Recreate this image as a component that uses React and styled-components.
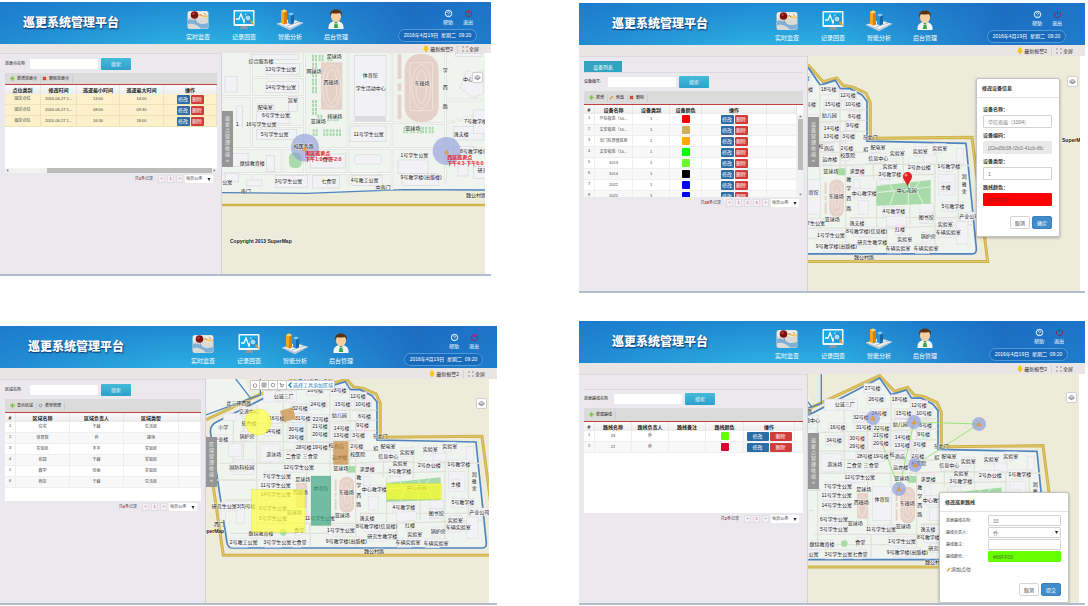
import React from "react";
import styled, { createGlobalStyle, css } from "styled-components";

const Global = createGlobalStyle`
  *, *::before, *::after { box-sizing: border-box; }
  body {
    margin: 0;
    background: #fff;
    color: #444;
    font-family: "Liberation Sans", "Noto Sans CJK SC", sans-serif;
    font-size: 5px;
    line-height: 8px;
  }
  button, input, select { font: inherit; color: inherit; margin: 0; }
  a { color: inherit; text-decoration: none; }
`;

/* ---------- page frame ---------- */

const Page = styled.main`
  display: flex;
  gap: 82px;
  padding-right: 3px;
`;
const Column = styled.div`
  flex: ${(p) => p.$grow} 1 0;
  min-width: 0;
  display: flex;
  flex-direction: column;
  gap: ${(p) => p.$gap}px;
  padding-top: ${(p) => p.$top}px;
`;
const Screen = styled.section`
  display: flex;
  flex-direction: column;
  margin-right: ${(p) => p.$inset || 0}px;
  min-height: ${(p) => p.$height}px;
  border-bottom: 2px solid #b4bdcb;
`;

/* ---------- header ---------- */

const Header = styled.header`
  display: flex;
  height: 42px;
  padding: 0 ${(p) => p.$right}px 0 ${(p) => p.$left}px;
  color: #fff;
  background:
    linear-gradient(90deg, rgba(26, 114, 200, 0.6) 0%, rgba(38, 160, 220, 0) 34%, rgba(38, 160, 220, 0) 52%, rgba(28, 104, 192, 0.85) 84%, rgba(28, 112, 198, 0.8) 100%),
    linear-gradient(180deg, #1f8ad2 0%, #2caee1 100%);
`;
const Title = styled.h1`
  flex: 0 0 152px;
  margin: 0;
  font-size: 12px;
  font-weight: 900;
  line-height: 42px;
  text-shadow: 1px 1px 1px #10457f, 0 1px 1px #10457f;
  white-space: nowrap;
`;
const Nav = styled.nav`
  display: flex;
`;
const NavLink = styled.a`
  width: 46px;
  padding-top: 6px;
  display: flex;
  flex-direction: column;
  align-items: center;
  gap: 3px;
  font-size: 6px;
  white-space: nowrap;
`;
const Tools = styled.div`
  margin-left: auto;
  padding-top: 7px;
  display: flex;
  flex-direction: column;
  align-items: flex-end;
`;
const ToolRow = styled.div`
  display: flex;
  gap: 2px;
`;
const ToolButton = styled.button`
  width: 18px;
  height: 18px;
  padding: 0;
  border: 0;
  background: none;
  display: flex;
  flex-direction: column;
  align-items: center;
  line-height: 8px;
`;
const DatePill = styled.time`
  width: 79px;
  height: 13px;
  margin-top: 2px;
  border: 1px solid #4d9bd8;
  border-radius: 7px;
  background: rgba(20, 96, 176, 0.5);
  line-height: 11px;
  text-align: center;
  white-space: nowrap;
`;
const StatusBar = styled.div`
  display: flex;
  justify-content: flex-end;
  align-items: center;
  height: ${(p) => p.$height}px;
  padding-right: 12px;
  background: #e9e5e5;
  color: #333;
`;
const StatusLink = styled.a`
  display: flex;
  align-items: center;
  gap: 1px;
  & + & {
    margin-left: 4px;
    padding-left: 4px;
    border-left: 1px solid #d5d0d0;
  }
`;

/* ---------- side panel ---------- */

const Body = styled.div`
  flex: 1;
  display: flex;
`;
const Side = styled.aside`
  flex: 0 0 ${(p) => p.$width}px;
  padding: 4px 4px 0 5px;
  background: #ebe9ee;
  border-top: 1px solid #dcd9de;
  border-right: 1px solid #d4d1d8;
`;
const Tabs = styled.div`
  display: flex;
  height: ${(p) => p.$height}px;
  margin-bottom: 3px;
  border-bottom: 1px solid #dcd9df;
`;
const Tab = styled.button`
  width: 38px;
  padding: 0;
  border: 0;
  background: #31a3c0;
  color: #fff;
`;
const Search = styled.form`
  display: flex;
  align-items: center;
  gap: 3px;
  margin-bottom: 3px;
  color: #222;
`;
const SearchLabel = styled.label`
  flex: 0 0 ${(p) => p.$width}px;
  font-size: 4px;
  white-space: nowrap;
`;
const SearchInput = styled.input`
  width: 68px;
  height: 10px;
  border: 0;
  border-radius: 1px;
  background: #fff;
`;
const SearchButton = styled.button`
  width: 30px;
  height: 12px;
  padding: 0;
  border: 0;
  border-radius: 1px;
  background: linear-gradient(#45bbd9, #2da0cc);
  color: #e6f6fb;
`;
const Toolbar = styled.div`
  display: flex;
  align-items: center;
  height: ${(p) => p.$height}px;
  padding-left: 4px;
  background: #dbdbdb;
  border-bottom: 1px solid #c33f3f;
`;
const ToolbarButton = styled.button`
  display: flex;
  align-items: center;
  gap: 2px;
  height: 8px;
  padding: 0 3px 0 1px;
  border: 0;
  border-right: 1px solid #cdcdcd;
  background: none;
  color: #222;
  font-size: 4px;
  white-space: nowrap;
`;
const GridBox = styled.div`
  display: flex;
  flex-direction: column;
  height: ${(p) => p.$height}px;
  background: #fff;
  overflow: hidden;
`;
const GridRow = styled.div`
  flex: 1;
  display: flex;
  align-items: flex-start;
  min-height: 0;
`;
const Table = styled.table`
  flex: 1;
  min-width: 0;
  border-collapse: separate;
  border-spacing: 0;
  table-layout: fixed;
`;
const Th = styled.th`
  width: ${(p) => (p.$w ? p.$w + "px" : "auto")};
  height: 9px;
  padding: 0;
  background: linear-gradient(#fafafa, #ececec);
  border-right: 1px solid #e6e6e6;
  color: #222;
  font-size: 5px;
  font-weight: 700;
  line-height: 8px;
  white-space: nowrap;
`;
const Tr = styled.tr`
  background: ${(p) => (p.$tone === "warm" ? "#fcf1cb" : p.$odd ? "#f8f8f8" : "#fff")};
`;
const Td = styled.td`
  height: 11px;
  padding: 0;
  border-right: 1px solid ${(p) => (p.$tone === "warm" ? "#efe3b8" : "#efefef")};
  border-bottom: 1px solid ${(p) => (p.$tone === "warm" ? "#efe3b8" : "#efefef")};
  font-size: 4px;
  line-height: 8px;
  text-align: center;
  white-space: nowrap;
  overflow: hidden;
  &:first-child { vertical-align: ${(p) => (p.$tone === "warm" ? "middle" : "top")}; }
`;
const Actions = styled.div`
  display: flex;
  justify-content: center;
  gap: 1px;
`;
const ActionButton = styled.button`
  width: ${(p) => (p.$wide ? 22 : 13)}px;
  height: 9px;
  padding: 0;
  border: 0;
  border-radius: 1px;
  background: ${(p) => (p.$danger ? "#d03c3a" : "#2c6ca5")};
  color: #fff;
  font-size: 5px;
  line-height: 8px;
`;
const Swatch = styled.span`
  display: block;
  width: 8px;
  height: 8px;
  margin: 0 auto;
  border-radius: 1px;
  background: ${(p) => p.$color};
`;
const VRail = styled.div`
  flex: 0 0 6px;
  align-self: stretch;
  margin-top: 9px;
  padding-left: 1px;
  display: flex;
  flex-direction: column;
  background: #f1f1f1;
`;
const HRail = styled.div`
  display: flex;
  height: 5px;
  background: #f1f1f1;
`;
const HTrack = styled.div`
  flex: 1;
  padding-left: 37px;
`;
const VTrack = styled.div`
  flex: 1;
`;
const Thumb = styled.div`
  height: ${(p) => p.$h}px;
  background: #bcbcbc;
`;
const Pager = styled.div`
  display: flex;
  justify-content: flex-end;
  align-items: center;
  gap: 2px;
  margin-top: 2px;
  padding-right: 4px;
  font-size: 4px;
  b { color: #c22; }
`;
const Total = styled.span`
  margin-right: 3px;
`;
const PageButton = styled.button`
  width: 7px;
  height: 8px;
  padding: 0;
  border: 1px solid #e0dde3;
  background: #f3f1f5;
  color: ${(p) => (p.$number ? "#d22" : "#777")};
  line-height: 6px;
`;
const SizeSelect = styled.select`
  width: 28px;
  height: 8px;
  padding: 0 1px;
  border: 0;
  background: #fff url("data:image/svg+xml,%3Csvg xmlns='http://www.w3.org/2000/svg' width='4' height='3'%3E%3Cpath d='M.5 0h3L2 3z' fill='%23222'/%3E%3C/svg%3E") no-repeat right 2px center;
  appearance: none;
`;

/* ---------- map ---------- */

const MapArea = styled.div`
  position: relative;
  flex: 1;
  min-width: 0;
  margin-right: ${(p) => p.$inset}px;
  background: #edecdb;
  overflow: hidden;
`;
const MapSvg = styled.svg`
  position: absolute;
  inset: 0;
  width: 100%;
  height: 100%;
  text {
    font-size: 5px;
    text-anchor: middle;
    fill: #161616;
    stroke: #fff;
    stroke-width: 1px;
    stroke-opacity: 0.5;
    paint-order: stroke;
  }
`;
const Collapse = styled.button`
  position: absolute;
  left: 0;
  top: ${(p) => p.$top}px;
  width: 11px;
  padding: 4px 0;
  border: 0;
  background: #969696;
  color: #eee;
  display: flex;
  flex-direction: column;
  align-items: center;
  font-size: 5px;
  line-height: 6px;
`;
const LayerButton = styled.button`
  position: absolute;
  top: ${(p) => p.$top}px;
  right: 2px;
  width: 11px;
  height: 11px;
  padding: 1px;
  border: 1px solid #cfcfcf;
  border-radius: 2px;
  background: #fff;
  display: flex;
`;
const DrawTools = styled.div`
  position: absolute;
  top: 1px;
  left: 44px;
  display: flex;
  align-items: center;
  height: 10px;
  background: #fff;
  border: 1px solid #c9c9c9;
  color: #1a86c0;
  white-space: nowrap;
`;
const DrawButton = styled.button`
  width: 9px;
  height: 8px;
  padding: 1px;
  border: 0;
  border-right: 1px solid #ccc;
  background: none;
  display: flex;
`;
const DrawHint = styled.span`
  display: flex;
  align-items: center;
  gap: 1px;
  padding: 0 1px;
`;

/* ---------- dialogs ---------- */

const Dialog = styled.form`
  position: absolute;
  right: ${(p) => p.$right}px;
  width: ${(p) => p.$width}px;
  background: #fff;
  border: 1px solid #c4c4c0;
  border-radius: 2px;
  box-shadow: 0 1px 3px rgba(0, 0, 0, 0.3);
  ${(p) => (p.$dock ? css`bottom: 0;` : css`top: ${p.$top}px;`)}
`;
const DialogTitle = styled.h2`
  height: 19px;
  margin: 0;
  padding-left: 5px;
  border-bottom: 1px solid #e4e4e4;
  color: #333;
  font-size: 5px;
  line-height: 18px;
`;
const Fields = styled.div`
  display: flex;
  flex-direction: column;
  padding: ${(p) => (p.$inline ? "3px 7px 0 6px" : "7px 7px 0 6px")};
  gap: ${(p) => (p.$inline ? 1 : 0)}px;
`;
const Field = styled.div`
  ${(p) =>
    p.$inline
      ? css`
          display: grid;
          grid-template-columns: 42px 1fr;
          align-items: center;
          font-size: 4px;
        `
      : css`
          display: flex;
          flex-direction: column;
          gap: 2px;
          padding-bottom: 3px;
          font-weight: 700;
          color: #333;
        `}
`;
const control = css`
  width: 100%;
  min-width: 0;
  height: ${(p) => (p.$short ? 11 : 13)}px;
  padding: 0 4px;
  border: 1px solid ${(p) => p.$fill || "#d2d2d2"};
  border-radius: 1px;
  background-color: ${(p) => p.$fill || "#fff"};
  color: ${(p) => p.$ink || "#777"};
  font-size: 5px;
  font-weight: 400;
`;
const Input = styled.input`
  ${control}
`;
const Select = styled.select`
  ${control}
  appearance: none;
  background-image: url("data:image/svg+xml,%3Csvg xmlns='http://www.w3.org/2000/svg' width='3' height='3'%3E%3Cpath d='M0 0h3L1.5 3z' fill='%23222'/%3E%3C/svg%3E");
  background-repeat: no-repeat;
  background-position: right 2px center;
`;
const AddPoint = styled.button`
  display: flex;
  align-items: center;
  align-self: flex-start;
  height: 12px;
  padding: 0;
  border: 0;
  background: none;
  color: #444;
`;
const DialogFooter = styled.div`
  display: flex;
  justify-content: flex-end;
  gap: 2px;
  padding: ${(p) => (p.$inline ? "8px 7px 6px" : "7px 7px")};
`;
const DialogButton = styled.button`
  width: 20px;
  height: 13px;
  padding: 0;
  border: 1px solid ${(p) => (p.$primary ? "#3b82c0" : "#d4d4d4")};
  border-radius: 2px;
  background: ${(p) => (p.$primary ? "#428bca" : "#fff")};
  color: ${(p) => (p.$primary ? "#fff" : "#333")};
`;

/* ---------- icons ---------- */

const PatrolIcon = () => (
  <svg width="22" height="22" viewBox="0 0 22 22">
    <rect x="0.5" y="3" width="21" height="18" rx="2.5" fill="#dcdad6" />
    <path d="M1 9.5C6 8 9 7 13 9s6 1 8-1V5.500Q21 3.500 19 3.500H3Q1 3.500 1 5.500z" fill="#efece6" />
    <path d="M10 7c4-1 6 3 11 1" fill="none" stroke="#f3c566" strokeWidth="1.800" />
    <path d="M1 12c4-1 7 0 9 2s6 3 11 1v3.500a2 2 0 0 1-2 2H14C11 18 8 15 1 16z" fill="#7fb0d8" />
    <path d="M13 6l2 2M17 5l2 2M8 11l1 3" stroke="#8b8b8b" strokeWidth="0.8" />
    <circle cx="7.500" cy="7" r="3.800" fill="#7f1113" />
    <circle cx="6.500" cy="5.800" r="1.200" fill="#b5443f" />
  </svg>
);
const MonitorIcon = () => (
  <svg width="22" height="22" viewBox="0 0 22 22">
    <rect x="0.500" y="2" width="21" height="16" rx="1" fill="#f3f7fa" />
    <rect x="2" y="3.500" width="18" height="12.500" fill="#18a9e6" />
    <path d="M3 11h3l2-5 3 8 2-7 1 3h2" fill="none" stroke="#fff" strokeWidth="1.300" />
    <circle cx="15" cy="10" r="3.200" fill="#9be0fa" stroke="#1663a7" strokeWidth="0.900" />
    <path d="M17.500 12.500l3 4" stroke="#e79c35" strokeWidth="1.600" />
    <path d="M8 18h6l1 3H7z" fill="#8d9aa5" />
  </svg>
);
const ChartIcon = () => (
  <svg width="28" height="22" viewBox="0 0 28 22">
    <path d="M1 16l13-5 13 4-13 7z" fill="#eef2f5" />
    <path d="M14 22L27 15v-1L14 20 1 15v1z" fill="#b5c3cf" />
    <path d="M9 16l12-4M11 18l12-4" stroke="#a4b4c1" strokeWidth="0.800" />
    <path d="M5 3l3-1.500L11 3v12l-3 1.500L5 15z" fill="#f6a81c" />
    <path d="M8 4.500L11 3v12l-3 1.500z" fill="#d97e0a" />
    <path d="M5 3l3-1.500L11 3 8 4.500z" fill="#ffd772" />
    <path d="M12 6l3-1.500L18 6v9l-3 1.500-3-1.500z" fill="#2b8fd6" />
    <path d="M15 7.500L18 6v9l-3 1.500z" fill="#1768ab" />
    <path d="M12 6l3-1.500L18 6l-3 1.500z" fill="#8acdf6" />
  </svg>
);
const UserIcon = () => (
  <svg width="18" height="22" viewBox="0 0 18 22">
    <path d="M1.500 21c-.5-5 2-8 7.500-8s8 3 7.500 8z" fill="#f4f6f4" />
    <path d="M8 14h2l1.200 6H6.800z" fill="#37a64b" />
    <path d="M6 13l3 3 3-3" fill="none" stroke="#c4ccd0" strokeWidth="0.800" />
    <ellipse cx="9" cy="8.500" rx="5" ry="5.500" fill="#f9cf9f" />
    <path d="M3 8C2.500 3 6 1.500 9 1.500S15.500 3 15 8c-.6-1.500-1-2.500-2.500-3C9 6 6 5.500 5 5 3.800 6 3.500 7 3 8z" fill="#5b3210" />
  </svg>
);
const HelpIcon = () => (
  <svg width="9" height="9" viewBox="0 0 9 9" fill="none" stroke="#fff" strokeWidth="1">
    <circle cx="4.500" cy="4.500" r="3.200" />
    <path d="M3.500 3.800c0-1.600 2.200-1.300 2 0-.1.600-1 .6-1 1.300M4.500 5.800v.7" strokeWidth="0.700" />
  </svg>
);
const PowerIcon = () => (
  <svg width="9" height="9" viewBox="0 0 9 9" fill="none" stroke="#96204a" strokeWidth="1">
    <path d="M2.800 2.200a3 3 0 1 0 3.400 0M4.500 1v3.200" />
  </svg>
);
const BellIcon = () => (
  <svg width="6" height="7" viewBox="0 0 6 7">
    <path d="M3 .5C1.500.5 1.200 2 1.200 3.200L.2 5.300h5.600l-1-2.100C4.800 2 4.500.5 3 .5z" fill="#f8c80a" />
    <circle cx="3" cy="5.900" r=".9" fill="#e7a800" />
  </svg>
);
const FullIcon = () => (
  <svg width="6" height="6" viewBox="0 0 6 6" fill="none" stroke="#999" strokeWidth="0.600">
    <path d="M.5 2V.5H2M4 .5h1.500V2M5.500 4v1.500H4M2 5.500H.5V4M1 1l1 1M5 1L4 2M1 5l1-1M5 5L4 4" />
  </svg>
);
const glyphs = {
  plus: <path d="M2.500.3v4.400M.3 2.500h4.400" stroke="#7cc03c" strokeWidth="1.400" />,
  cross: <path d="M1 1l3 3M4 1L1 4" stroke="#d0301c" strokeWidth="1.400" />,
  pencil: <path d="M.8 4.300L4 1" stroke="#e6962e" strokeWidth="1.200" />,
  gear: <circle cx="2.500" cy="2.500" r="1.400" fill="none" stroke="#7792a8" strokeWidth="0.900" />,
};
const Glyph = ({ name }) => (
  <svg width="5" height="5" viewBox="0 0 5 5">{glyphs[name]}</svg>
);
const arrows = {
  up: "M1 3.300L2.500 1.500 4 3.300z",
  down: "M1 1.700L2.500 3.500 4 1.700z",
  left: "M3.300 1L1.500 2.500 3.300 4z",
  right: "M1.700 1L3.500 2.500 1.700 4z",
};
const Arrow = ({ dir }) => (
  <svg width="5" height="5" viewBox="0 0 5 5"><path d={arrows[dir]} fill="#777" /></svg>
);
const LayersIcon = () => (
  <svg width="7" height="7" viewBox="0 0 7 7">
    <path d="M3.500 .8L6.500 2.200 3.500 3.600.5 2.200z" fill="#bdbdc4" />
    <path d="M.5 2.400v2.200L3.500 6.200 6.500 4.600V2.400L3.500 3.900z" fill="#9c9ca6" />
  </svg>
);
const drawShapes = [
  ["平移", <path key="a" d="M1.500 5V2.500l.8-.8 .8.5.8-.5.9.8V4L4 5.300H2.300z" />],
  ["矩形", <path key="b" d="M1 1h4v4H1zM1 3h4M3 1v4" />],
  ["圆形", <circle key="c" cx="3" cy="3" r="1.800" />],
  ["多边形", <path key="d" d="M1 1l1 4 2-.5.8-2L3 3z" />],
];

/* ---------- campus map ---------- */

const places = `公诚三厂,251,227|北三环西路,116,248|交流中心,147,273|软件楼,147,309|小学,70,322|产业楼,62,356|锅炉房,141,347
32号楼,300,264|24号楼,355,253|16号楼,230,295|31号楼,308,293|22号楼,362,296|34号楼,219,332|30号楼,289,327|29号楼,289,351
21号楼,360,319|20号楼,360,342|28号楼,311,380|19号楼,360,380|游泳场,221,403|二食堂,280,407|三食堂,331,407|国防科技园,125,440
12号学生公寓,296,442|7号学生公寓,231,468|11号学生公寓,227,495|14号学生公寓,227,523|6号学生公寓,219,565|5号学生公寓,219,595
研究生公寓3(5)号楼,101,558|西门,57,611|继续教育楼,183,639|食堂,298,631|2号教工公寓,131,667|3号学生公寓,232,667|七食堂,297,667
足球场,308,476|西操场,301,516|篮球场,283,576|体育馆,363,505|11号学生公寓,360,595|26号楼,346,211|27号楼,335,178|18号楼,416,211
12号楼,474,228|15号楼,428,253|10号楼,489,252|幼儿园,418,284|6号楼,494,287|14号楼,425,323|9号楼,488,314|13号楼,424,346
3号楼,476,344|校,393,374|商店,417,379|2号楼,471,379|校医院,473,401|远亦楼,419,412|东北门,540,349|招,527,383|配电室,564,378
信息中心,565,407|实验室,622,395|实验室,691,388|实验室,749,379|实验室,600,430|3号教学楼,600,453|2号办公楼,688,434
1号教学楼,777,432|求是楼,502,447|篮球场,422,445|教,476,470|学,476,496|西,476,524|路,476,551|中心教学楼,523,508
中心花园,650,500|4号教学楼,612,561|主楼,767,491|5号教学楼,789,547|图书馆,709,578|产业公司,838,576|实验室,766,599
车辆实验室,775,622|红楼,630,614|东操场,439,517|篮球场,427,585|逸夫楼,501,594|1号学生公寓,423,629|8号教学楼(信息楼),530,619
研究生教学楼,547,649|9号教学楼(出版楼),439,662|实验室,644,642|锅炉房,715,634|车辆实验室,624,667|车辆实验室,708,668
魏公村路,522,692|润,823,461|雅,823,482|舍,823,504`
  .split(/[|\n]/)
  .map((s) => s.split(","))
  .map(([name, x, y]) => ({ name, x: +x, y: +y }));

const plain = /[场路门教学西]$|花园|^.$/;
const buildings = places.filter((p) => !plain.test(p.name));

const halls = [
  [180, 372, 60, 54], [190, 212, 100, 34], [100, 420, 60, 44], [110, 560, 24, 50], [60, 560, 16, 40],
  [745, 455, 50, 60], [690, 540, 40, 56], [800, 590, 34, 66], [570, 470, 30, 14], [505, 530, 30, 40],
  [590, 575, 60, 30], [490, 470, 20, 26], [700, 400, 40, 24], [800, 380, 20, 44], [70, 280, 40, 22], [85, 370, 40, 40],
];

const CampusGround = () => (
  <>
    <path d="M18 120L120 120 150 232 18 290z" fill="#eff5ee" />
    <path d="M18 300L115 253 356 143 400 189 440 178 460 200 490 205 528 222 541 250V352L846 349 893 706H70L18 350" fill="none" stroke="#cfb249" strokeWidth="9" />
    <path d="M18 300L115 253 356 143 400 189 440 178 460 200 490 205 528 222 541 250V352L846 349 893 706H70L18 350" fill="none" stroke="#dfc86e" strokeWidth="3" />
    <path d="M140 261L356 150 391 199 436 185 451 209H480L516 227 531 246V360L828 366 859 668Q860 684 848 684H97Q84 684 81 668L32 340Q28 318 48 307z" fill="#eff5ee" stroke="#4f84c0" strokeWidth="5" />
    <path d="M98 165L152 235 181 225V130M18 285L152 235" fill="none" stroke="#4f84c0" strokeWidth="4" />
    <g fill="none" stroke="#e2e1da" strokeWidth="4">
      <path d="M70 365H390L470 360M60 430H460L560 425 840 430M170 255V680M390 200V610M467 300V680M250 230V430M320 250V610M450 210V440M50 480H180M75 540H160M160 610H600L850 600M330 610V680M560 470V610M735 380V680M640 380V480M550 385V470M90 640H400M590 600V680M805 385V660M170 310L400 305 530 300M180 390H400M400 270H530M400 332H530M400 392H530M660 540V600M480 460L740 455M480 580H850" />
      <path d="M100 300V430M130 290V420M210 370V430" />
    </g>
    <g fill="#f2f2f6" stroke="#dadade" strokeWidth="1.500">
      {halls.map(([x, y, w, h]) => (
        <rect key={x + "-" + y} x={x} y={y} width={w} height={h} />
      ))}
      {buildings.map((p, i) => {
        const w = Math.min(80, p.name.length * 13);
        return <path key={i} d={`M${p.x - w / 2} ${p.y - 12}h${w}v22h-${w / 3}v5h-${(w * 2) / 3}z`} />;
      })}
      <rect x="335" y="470" width="56" height="100" />
    </g>
    <g fill="#e6d2c9">
      <rect x="418" y="470" width="44" height="108" rx="20" />
      <rect x="288" y="488" width="32" height="76" rx="4" />
      <path d="M404 478h6v34h-6zM404 518h6v12h-6zM404 536h6v34h-6z" />
    </g>
    <g fill="none" stroke="#f4e9e4" strokeWidth="2">
      <rect x="426" y="482" width="28" height="84" rx="14" />
      <ellipse cx="304" cy="526" rx="11" ry="30" />
      <ellipse cx="440" cy="524" rx="7" ry="26" />
    </g>
    <g fill="#a8dba9">
      <path d="M559 489L722 472V540L559 546z" />
      <rect x="440" y="438" width="26" height="20" />
      <circle cx="250" cy="637" r="10" />
    </g>
    <path d="M559 508L722 492M600 484l10 20M655 478l6 18M600 543l14-38M690 475l-14 20M700 540l-24-44M655 542V498" stroke="#dcefdc" strokeWidth="3" fill="none" />
  </>
);

/* labels that would lie wholly under the collapse tab are left out */
const Campus = ({ kx, ky, ox, oy, tab, under, children }) => (
  <MapSvg role="img" aria-label="校园地图">
    <g transform={`translate(${ox} ${oy}) scale(${kx} ${ky})`}>
      <CampusGround />
    </g>
    {under}
    {places
      .map((p) => ({ name: p.name, x: p.x * kx + ox, y: p.y * ky + oy }))
      .filter((p) => p.x > -12 && p.y > 0 && !(p.x < 9 && p.y > tab[0] && p.y < tab[1]))
      .map((p, i) => (
        <text key={i} x={p.x} y={p.y + 2}>{p.name}</text>
      ))}
    {children}
  </MapSvg>
);

const Warn = ({ x, y }) => (
  <path d={`M${x} ${y - 2}l2 4h-4z`} fill="#f0a030" stroke="#d98a20" strokeWidth="0.400" />
);
const Node = ({ x, y }) => (
  <g>
    <circle cx={x} cy={y} r="7" fill="#8b98dc" fillOpacity="0.65" />
    <Warn x={x} y={y} />
  </g>
);

/* ---------- close-up map ---------- */

const closePlaces = `综合服务楼,63,183|13号学生公寓,122,207|14号学生公寓,122,262|浴室,158,299|配电室,76,321|6号学生公寓,108,344
16号学生公寓,64,372|5号学生公寓,104,402|足球场,283,168|网球场,222,214|西操场,273,246|排球场,284,347|篮球场,235,364
体育馆,391,226|学生活动中心,392,265|11号学生公寓,386,403|东操场,546,250|篮球场,518,383|学,616,209|西,616,262|路,616,317
中心,684,237|7号教学楼,707,364|逸夫楼,664,401|8号教学楼(信息楼),722,452|1号学生公寓,523,464|9号教学楼(出版楼),543,531
校医务路,191,437|继续教育楼,37,488|3号学生公寓,145,542|七食堂,266,542|4号教工公寓,374,539|中南门,429,562|南门,17,573
魏公村路,708,586|食堂,262,477|研究生,735,509|公寓,-38,546|1,-8,372`
  .split(/[|\n]/)
  .map((s) => s.split(","));

const closeBlocks = [
  [36, 164, 140, 14], [78, 190, 100, 34], [78, 244, 98, 34], [52, 312, 50, 22], [145, 290, 28, 44], [50, 334, 100, 36],
  [50, 388, 120, 30], [-45, 230, 36, 46], [-10, 318, 18, 60], [-36, 460, 60, 40], [80, 466, 24, 48], [106, 526, 96, 36],
  [218, 526, 80, 38], [336, 526, 90, 30], [344, 166, 94, 184], [330, 378, 108, 46], [212, 462, 104, 42], [474, 480, 90, 40],
  [486, 520, 110, 36], [640, 380, 90, 40], [700, 330, 40, 70], [640, 440, 60, 22], [654, 462, 30, 66], [700, 500, 40, 36], [646, 160, 80, 10],
  [-45, 520, 40, 26], [20, 540, 46, 18], [-50, 470, 20, 30],
];
const courts = [
  [216, 164], [236, 164], [262, 164], [216, 188], [216, 212], [216, 236], [216, 260], [216, 300], [216, 324],
  [232, 344], [262, 344], [281, 344], [218, 388], [250, 388], [269, 388], [288, 388],
  [490, 380], [510, 380], [530, 380], [546, 380], [566, 380],
];
const closeRoads =
  "M-60 445H1200M34 150V445M194 150V560M324 150V445M456 150V570M616 150V550M-60 290H194M34 380H194M324 368H456M-60 520H456M126 445V520M34 232H194M460 368L616 370 730 340M616 300H730M324 445V560M34 520V560";

const CloseMap = () => {
  const px = (x) => x / 3 + 18;
  const py = (y) => y / 3 - 53;
  return (
    <MapSvg role="img" aria-label="校园地图">
      <g transform="translate(18 -53) scale(0.3333)">
        <path d="M-60 150H1200V572L490 569 200 580-60 578z" fill="#eff5ee" />
        <path d="M-60 578L200 580 490 569 1200 572" fill="none" stroke="#4f84c0" strokeWidth="4" />
        <path d="M-60 615H1200" stroke="#d3b547" strokeWidth="7" />
        <path d={closeRoads} fill="none" stroke="#d9d8d3" strokeWidth="7" />
        <path d={closeRoads} fill="none" stroke="#f7f8f6" strokeWidth="4" />
        <g fill="#f2f2f6" stroke="#d6d6db" strokeWidth="2">
          {closeBlocks.map(([x, y, w, h], i) => (
            <rect key={i} x={x} y={y} width={w} height={h} />
          ))}
          <path d="M680 210l20 8 30-8v70l-30 14-40-30z" />
          <rect x="342" y="464" width="84" height="28" rx="13" />
        </g>
        <path d="M344 350h94v14h-94z" fill="#dcdce0" />
        <g fill="#e5d1c8">
          <rect x="243" y="187" width="64" height="142" rx="4" />
          <rect x="494" y="162" width="102" height="204" rx="46" />
          <path d="M473 163h11v74h-11zM473 250h11v22h-11zM473 284h11v74h-11z" />
        </g>
        <g fill="none" stroke="#f5ebe6" strokeWidth="2">
          <ellipse cx="275" cy="258" rx="28" ry="64" />
          <ellipse cx="275" cy="258" rx="16" ry="50" />
          <rect x="510" y="188" width="68" height="144" rx="6" />
          <ellipse cx="544" cy="260" rx="28" ry="66" />
          <ellipse cx="544" cy="260" rx="16" ry="50" />
        </g>
        <g fill="#add9ae">
          {courts.map(([x, y], i) => (
            <path key={i} d={`M${x} ${y}h6v9h-6zM${x + 9} ${y}h6v9h-6zM${x} ${y + 11}h6v9h-6zM${x + 9} ${y + 11}h6v9h-6z`} />
          ))}
          <rect x="147" y="458" width="38" height="46" rx="14" />
        </g>
      </g>
      <circle cx={px(195)} cy={py(443)} r="14" fill="#8b98dc" fillOpacity="0.6" />
      <circle cx={px(620)} cy={py(453)} r="14" fill="#8b98dc" fillOpacity="0.6" />
      {closePlaces.map(([name, x, y], i) => (
        <text key={i} x={px(+x)} y={py(+y) + 2}>{name}</text>
      ))}
      <Warn x={px(194)} y={py(446)} />
      <Warn x={px(620)} y={py(455)} />
      <RedText x={px(196)} y={py(466)}>南区巡更点</RedText>
      <RedText x={px(196)} y={py(484)}>下午1:0-下午2:0</RedText>
      <RedText x={px(622)} y={py(476)}>西区巡更点</RedText>
      <RedText x={px(622)} y={py(494)}>下午4:3-下午6:0</RedText>
      <BoldText x="8" y="190">Copyright 2013 SuperMap</BoldText>
    </MapSvg>
  );
};
const RedText = styled.text`
  && {
    fill: #e8141c;
    text-anchor: start;
    font-weight: 700;
    stroke: none;
  }
`;
const BoldText = styled.text`
  && {
    fill: #222;
    text-anchor: start;
    font-weight: 700;
  }
`;

/* ---------- shared pieces ---------- */

const navItems = [
  ["实时监查", PatrolIcon],
  ["记录回查", MonitorIcon],
  ["智能分析", ChartIcon],
  ["后台管理", UserIcon],
];

const TopArea = ({ left, right, bar }) => (
  <>
    <Header $left={left} $right={right}>
      <Title>巡更系统管理平台</Title>
      <Nav>
        {navItems.map(([name, Icon]) => (
          <NavLink key={name} href="#">
            <Icon />
            {name}
          </NavLink>
        ))}
      </Nav>
      <Tools>
        <ToolRow>
          <ToolButton type="button"><HelpIcon />帮助</ToolButton>
          <ToolButton type="button"><PowerIcon />退出</ToolButton>
        </ToolRow>
        <DatePill>2016年4月19日&nbsp; 星期二&nbsp; 09:20</DatePill>
      </Tools>
    </Header>
    <StatusBar $height={bar}>
      <StatusLink href="#"><BellIcon />最新报警2</StatusLink>
      <StatusLink href="#"><FullIcon />全屏</StatusLink>
    </StatusBar>
  </>
);

const SearchRow = ({ id, label, width }) => (
  <Search onSubmit={(e) => e.preventDefault()}>
    <SearchLabel htmlFor={id} $width={width}>{label}</SearchLabel>
    <SearchInput id={id} />
    <SearchButton>搜索</SearchButton>
  </Search>
);

const ToolbarRow = ({ items, height = 14 }) => (
  <Toolbar $height={height}>
    {items.map(([icon, name]) => (
      <ToolbarButton key={name} type="button"><Glyph name={icon} />{name}</ToolbarButton>
    ))}
  </Toolbar>
);

const RowActions = ({ wide }) => (
  <Actions>
    <ActionButton type="button" $wide={wide}>修改</ActionButton>
    <ActionButton type="button" $wide={wide} $danger>删除</ActionButton>
  </Actions>
);

const DataTable = ({ cols, rows, tone }) => (
  <Table>
    <thead>
      <tr>
        {cols.map(([name, w], i) => (
          <Th key={i} $w={w} scope="col">{name}</Th>
        ))}
      </tr>
    </thead>
    <tbody>
      {rows.map((row, i) => (
        <Tr key={i} $odd={i % 2} $tone={tone}>
          {row.map((cell, j) => (
            <Td key={j} $tone={tone}>{cell}</Td>
          ))}
        </Tr>
      ))}
    </tbody>
  </Table>
);

const PagerRow = ({ total, pages = 1 }) => (
  <Pager>
    <Total>共<b>{total}</b>条记录</Total>
    <PageButton type="button" aria-label="上一页">«</PageButton>
    {Array.from({ length: pages }, (_, i) => (
      <PageButton key={i} type="button" $number>{i + 1}</PageButton>
    ))}
    <PageButton type="button" aria-label="下一页">»</PageButton>
    <SizeSelect aria-label="每页条数"><option>每页10条</option></SizeSelect>
  </Pager>
);

const CollapseTab = ({ text, top }) => (
  <Collapse type="button" $top={top}>
    {[...text, "«"].map((c, i) => <span key={i}>{c}</span>)}
  </Collapse>
);
const Layers = ({ top }) => (
  <LayerButton type="button" aria-label="图层" $top={top}><LayersIcon /></LayerButton>
);

/* ---------- screens ---------- */

const PointScreen = () => (
  <Screen $height={274} $inset={6}>
    <TopArea left={23} right={14} bar={9} />
    <Body>
      <Side $width={222}>
        <SearchRow id="point-name" label="巡更点名称" width={22} />
        <ToolbarRow height={12} items={[["plus", "新增巡更点"], ["cross", "删除巡更点"]]} />
        <GridBox $height={88}>
          <GridRow>
            <DataTable
              tone="warm"
              cols={[["点位类别", 36], ["修改时间", 36], ["巡逻最小时间", 43], ["巡逻最大时间", 44], ["操作"]]}
              rows={[
                ["固定点位", "2016-06-27 1...", "13:00", "14:00", <RowActions />],
                ["固定点位", "2016-06-27 1...", "08:00", "09:30", <RowActions />],
                ["固定点位", "2016-06-27 1...", "16:30", "18:00", <RowActions />],
              ]}
            />
          </GridRow>
          <HRail><Arrow dir="left" /><HTrack><Thumb $h={5} /></HTrack><Arrow dir="right" /></HRail>
        </GridBox>
        <PagerRow total={3} />
      </Side>
      <MapArea $inset={6}>
        <CloseMap />
        <CollapseTab text="巡更点管理收缩" top={58} />
        <Layers top={19} />
      </MapArea>
    </Body>
  </Screen>
);

const devices = [
  ["华信夜巡（10...", "#ff0000"],
  ["文安夜巡（10...", "#cfae58"],
  ["北门队部值班室", "#ffa800"],
  ["文安夜巡（10...", "#00ff00"],
  ["1013", "#66ff2a"],
  ["1014", "#000000"],
  ["2022", "#0000ff"],
  ["1022", "#0000ff"],
];

const DeviceScreen = () => (
  <Screen $height={290}>
    <TopArea left={33} right={19} bar={11} />
    <Body>
      <Side $width={229}>
        <Tabs $height={12}><Tab type="button">设备列表</Tab></Tabs>
        <SearchRow id="device-id" label="设备编号:" width={21} />
        <ToolbarRow items={[["plus", "新增"], ["pencil", "修改"], ["cross", "删除"]]} />
        <GridBox $height={92}>
          <GridRow>
            <DataTable
              cols={[["#", 11], ["设备名称", 38], ["设备类别", 37], ["设备颜色", 32], ["操作", 65], [""]]}
              rows={devices.map(([name, color], i) => [i + 1, name, "1", <Swatch $color={color} />, <RowActions />, ""])}
            />
            <VRail><Arrow dir="up" /><VTrack><Thumb $h={51} /></VTrack><Arrow dir="down" /></VRail>
          </GridRow>
        </GridBox>
        <PagerRow total={28} pages={3} />
      </Side>
      <MapArea $inset={5}>
        <Campus kx={0.3333} ky={0.3477} ox={-118} oy={-40} tab={[58, 118]}>
          <path d="M99.500 131c-1-5-4.500-7-4.500-10.500a4.500 4.500 0 0 1 9 0c0 3.500-3.500 5.500-4.500 10.500z" fill="#e02020" />
          <circle cx="98" cy="119" r="1.500" fill="#f58a80" />
          <BoldText x="254" y="86">SuperMap</BoldText>
        </Campus>
        <CollapseTab text="设备管理收缩" top={61} />
        <Layers top={20} />
        <Dialog $right={20} $top={22} $width={84} onSubmit={(e) => e.preventDefault()}>
          <DialogTitle>修改设备信息</DialogTitle>
          <Fields>
            <Field>
              <label htmlFor="d-name">设备名称：</label>
              <Input id="d-name" defaultValue="华信夜巡（1004）" />
            </Field>
            <Field>
              <label htmlFor="d-code">设备编码：</label>
              <Input id="d-code" $fill="#e9e9e9" defaultValue="j32ed5b38-f2b3-41cb-8fc" />
            </Field>
            <Field>
              <label htmlFor="d-type">设备类型：</label>
              <Input id="d-type" defaultValue="1" />
            </Field>
            <Field>
              <label htmlFor="d-color">路线颜色：</label>
              <Input id="d-color" $fill="#ff0000" $ink="#962020" defaultValue="#FF0000" />
            </Field>
          </Fields>
          <DialogFooter>
            <DialogButton type="button">取消</DialogButton>
            <DialogButton $primary>确定</DialogButton>
          </DialogFooter>
        </Dialog>
      </MapArea>
    </Body>
  </Screen>
);

const AreaScreen = () => (
  <Screen $height={279}>
    <TopArea left={28} right={14} bar={11} />
    <Body>
      <Side $width={206}>
        <SearchRow id="area-name" label="区域名称" width={22} />
        <ToolbarRow items={[["plus", "显示区域"], ["gear", "类型管理"]]} />
        <GridBox $height={88}>
          <GridRow>
            <DataTable
              cols={[["#", 11], ["区域名称", 54], ["区域负责人", 54], ["区域类型", 55], [""]]}
              rows={[
                ["1", "住宅", "于嵘", "生活区", ""],
                ["2", "体育馆", "乔", "操场", ""],
                ["3", "实验区", "丰丰", "实验区", ""],
                ["4", "花园", "于嵘", "实验区", ""],
                ["5", "教学", "徐丽", "实验区", ""],
                ["6", "商店", "于嵘", "生活区", ""],
              ]}
            />
          </GridRow>
        </GridBox>
        <PagerRow total={6} />
      </Side>
      <MapArea $inset={8}>
        <Campus kx={0.3333} ky={0.3333} ox={-6} oy={-59} tab={[56, 112]}>
          <g transform="translate(-6 -59) scale(0.3333)" stroke="#9a9a50" strokeOpacity="0.4" fillOpacity="0.7">
            <circle cx="174" cy="306" r="40" fill="#ffff3c" />
            <path d="M240 273L278 262 287 297 252 306z" fill="#c98a3c" />
            <rect x="400" y="364" width="45" height="70" fill="#c98a3c" />
            <rect x="154" y="508" width="161" height="130" fill="#ffff3c" />
            <rect x="333" y="468" width="60" height="149" fill="#3aa682" />
            <rect x="559" y="490" width="166" height="49" fill="#ffff20" />
          </g>
          <BoldText x="-6" y="154">SuperMap</BoldText>
        </Campus>
        <CollapseTab text="区域管理收缩" top={58} />
        <Layers top={19} />
        <DrawTools>
          {drawShapes.map(([name, shape]) => (
            <DrawButton key={name} type="button" aria-label={name}>
              <svg width="6" height="6" viewBox="0 0 6 6" fill="none" stroke="#777" strokeWidth="0.700">{shape}</svg>
            </DrawButton>
          ))}
          <DrawHint>
            <svg width="4" height="6" viewBox="0 0 4 6"><path d="M3.500.5L1 3l2.500 2.500" fill="none" stroke="#1a86c0" strokeWidth="1.400" /></svg>
            选择工具添加区域
          </DrawHint>
        </DrawTools>
      </MapArea>
    </Body>
  </Screen>
);

const routeNodes = [[65, 44], [106, 48], [171, 50], [107, 91], [91, 115]];

const RouteScreen = () => (
  <Screen $height={284}>
    <TopArea left={33} right={17} bar={11} />
    <Body>
      <Side $width={229}>
        <Tabs $height={11} />
        <SearchRow id="route-name" label="巡更路线名称" width={27} />
        <ToolbarRow items={[["plus", "新建路线"]]} />
        <GridBox $height={91}>
          <GridRow>
            <DataTable
              cols={[["#", 11], ["路线名称", 37], ["路线负责人", 37], ["路线备注", 37], ["路线颜色", 38], ["操作", 51], [""]]}
              rows={[
                ["1", "33", "乔", "", <Swatch $color="#66ff00" />, <RowActions wide />, ""],
                ["2", "22", "乔", "", <Swatch $color="#d5002f" />, <RowActions wide />, ""],
              ]}
            />
          </GridRow>
        </GridBox>
        <PagerRow total={2} />
      </Side>
      <MapArea $inset={6}>
        <Campus
          kx={0.3333}
          ky={0.34}
          ox={-47}
          oy={-47}
          tab={[57, 119]}
          under={<path d="M65 44L91 115 106 48 171 50 107 91" fill="none" stroke="#97e874" strokeWidth="1" />}
        >
          {routeNodes.map(([x, y]) => <Node key={x} x={x} y={y} />)}
        </Campus>
        <CollapseTab text="巡更点管理收缩" top={59} />
        <Layers top={18} />
        <Dialog $right={10} $dock $width={130} onSubmit={(e) => e.preventDefault()}>
          <DialogTitle>修改巡更路线</DialogTitle>
          <Fields $inline>
            <Field $inline>
              <label htmlFor="r-name">巡更路线名称：</label>
              <Input id="r-name" $short defaultValue="33" />
            </Field>
            <Field $inline>
              <label htmlFor="r-owner">路线负责人：</label>
              <Select id="r-owner" $short><option>乔</option></Select>
            </Field>
            <Field $inline>
              <label htmlFor="r-note">路线备注：</label>
              <Input id="r-note" $short />
            </Field>
            <Field $inline>
              <label htmlFor="r-color">路线颜色：</label>
              <Input id="r-color" $short $fill="#66ff00" $ink="#4a7a20" defaultValue="#66FF00" />
            </Field>
            <AddPoint type="button"><Glyph name="pencil" />添加点位</AddPoint>
          </Fields>
          <DialogFooter $inline>
            <DialogButton type="button">取消</DialogButton>
            <DialogButton $primary>提交</DialogButton>
          </DialogFooter>
        </Dialog>
      </MapArea>
    </Body>
  </Screen>
);

export default function App() {
  return (
    <>
      <Global />
      <Page>
        <Column $grow={497} $gap={50} $top={2}>
          <PointScreen />
          <AreaScreen />
        </Column>
        <Column $grow={506} $gap={28} $top={3}>
          <DeviceScreen />
          <RouteScreen />
        </Column>
      </Page>
    </>
  );
}
